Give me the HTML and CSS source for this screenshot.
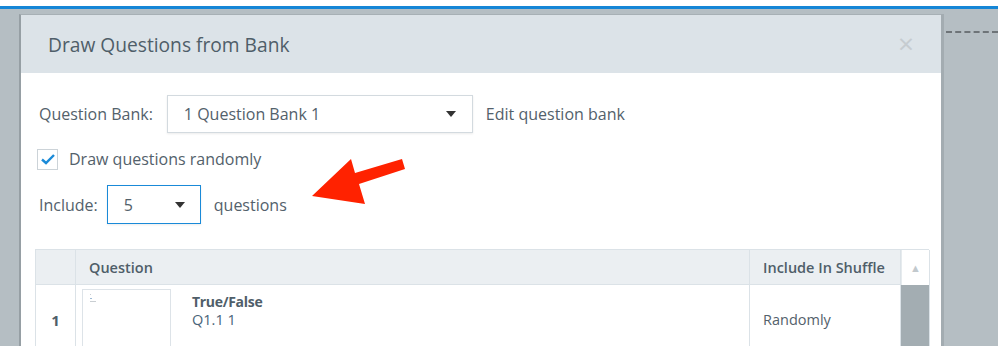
FILE: index.html
```html
<!DOCTYPE html>
<html lang="en">
<head>
    <meta charset="UTF-8">
    <title>Draw Questions from Bank</title>
    <link rel="stylesheet" href="styles.css">
</head>
<body>
    <div class="topbar"></div>

    <div class="stage">
        <div class="dialog">
            <div class="dialog-header">
                <span class="dialog-title">Draw Questions from Bank</span>
                <span class="close">&times;</span>
            </div>

            <div class="dialog-body">
                <div class="form-row">
                    <span class="label">Question Bank:</span>
                    <div class="select bank-select">
                        <span>1 Question Bank 1</span>
                        <span class="caret"></span>
                    </div>
                    <span class="link">Edit question bank</span>
                </div>

                <div class="form-row check-row">
                    <span class="checkbox">
                        <svg width="16" height="16" viewBox="0 0 16 16"><path d="M2 8.5 L6 12 L14 4" fill="none" stroke="#1a8ad8" stroke-width="2.4"/></svg>
                    </span>
                    <span class="label">Draw questions randomly</span>
                </div>

                <div class="form-row include-row">
                    <span class="label">Include:</span>
                    <div class="select count-select">
                        <span>5</span>
                        <span class="caret"></span>
                    </div>
                    <span class="label">questions</span>

                    <svg class="arrow" width="100" height="50" viewBox="0 0 100 50">
                        <polygon points="90,0 93,10 47,25 53,45 0,37 39,0 43,14" fill="#ff2200"/>
                    </svg>
                </div>

                <div class="table">
                    <div class="cell head num"></div>
                    <div class="cell head">Question</div>
                    <div class="cell head">Include In Shuffle</div>
                    <div class="cell scroll-up">&#9650;</div>

                    <div class="cell num row-num">1</div>
                    <div class="cell question">
                        <div class="thumb">
                            <span class="dot"></span>
                            <span class="dash blue"></span>
                            <span class="dash"></span>
                        </div>
                        <div class="q-text">
                            <div class="q-type">True/False</div>
                            <div class="q-name">Q1.1 1</div>
                        </div>
                    </div>
                    <div class="cell shuffle">Randomly</div>
                    <div class="cell scroll-thumb"></div>
                </div>
            </div>
        </div>
        <div class="dashes"></div>
    </div>
</body>
</html>
```

FILE: styles.css
```css
body {
    margin: 0;
    height: 346px;
    overflow: hidden;
    background-color: #b5bec3;
    font-family: "Open Sans", sans-serif;
    color: #53616b;
}

.topbar {
    height: 6px;
    background-color: #fff;
    border-bottom: 3px solid #1586d6;
}

.stage {
    display: flex;
    align-items: flex-start;
    padding-top: 5px;
    padding-left: 19px;
}

.dialog {
    width: 920px;
    background-color: #fff;
    border-left: 2px solid #969fa4;
    border-top: 1px solid #a7b0b5;
    box-shadow: 3px 0 0 #a3acb1;
    height: 400px;
}

.dialog-header {
    height: 58px;
    background-color: #dce3e8;
    display: flex;
    align-items: center;
    justify-content: space-between;
    padding: 0 27px 0 27px;
}

.dialog-title {
    font-size: 19.2px;
    color: #4f5e69;
}

.close {
    font-size: 28px;
    color: #c6ccd0;
    line-height: 1;
    margin-top: -2px;
}

.dialog-body {
    padding: 22px 12px 0 14px;
}

.form-row {
    display: flex;
    align-items: center;
    padding-left: 4px;
    font-size: 16px;
}

.select {
    display: flex;
    align-items: center;
    justify-content: space-between;
    box-sizing: border-box;
    background-color: #fff;
    border: 1px solid #d3dadf;
    box-shadow: 0 1px 2px rgba(0, 0, 0, 0.08);
    color: #53616b;
}

.bank-select {
    width: 306px;
    height: 38px;
    margin-left: 14px;
    padding: 0 16px 0 16px;
}

.caret {
    width: 0;
    height: 0;
    border-left: 5px solid transparent;
    border-right: 5px solid transparent;
    border-top: 6px solid #333;
}

.link {
    margin-left: 13px;
}

.check-row {
    margin-top: 15px;
    padding-left: 2px;
}

.checkbox {
    width: 21px;
    height: 21px;
    box-sizing: border-box;
    border: 1px solid #ccd3d8;
    display: flex;
    align-items: center;
    justify-content: center;
    margin-right: 11px;
}

.include-row {
    margin-top: 15px;
    position: relative;
}

.count-select {
    width: 94px;
    height: 39px;
    margin-left: 9px;
    margin-right: 13px;
    padding: 0 15px 0 16px;
    border-color: #1a8ad8;
}

.arrow {
    position: absolute;
    left: 277px;
    top: -26px;
}

.table {
    margin-top: 25px;
    display: grid;
    grid-template-columns: 40px 674px 151px 29px;
    grid-template-rows: 35px 70px;
    border-top: 1px solid #dbe2e7;
    border-left: 1px solid #dbe2e7;
    width: 894px;
    box-sizing: border-box;
}

.cell {
    border-right: 1px solid #dbe2e7;
    border-bottom: 1px solid #dbe2e7;
    font-size: 14.5px;
    overflow: hidden;
}

.head {
    background-color: #ebeff2;
    display: flex;
    align-items: center;
    padding-left: 13px;
    font-weight: 600;
    color: #4f5e69;
}

.head.num {
    padding-left: 0;
}

.scroll-up {
    box-sizing: border-box;
    background-color: #fff;
    color: #c2c9cd;
    font-size: 11px;
    display: flex;
    align-items: center;
    justify-content: center;
    border-right: 1px solid #dbe2e7;
    border-bottom: 0;
    border-left: 1px solid #e6ebee;
}

.row-num {
    display: flex;
    align-items: center;
    justify-content: center;
    font-weight: 700;
    font-size: 15px;
    color: #4f5e69;
}

.question {
    display: flex;
    padding: 4px 0 0 6px;
}

.thumb {
    width: 89px;
    height: 70px;
    flex-shrink: 0;
    box-sizing: border-box;
    border: 1px solid #dde3e8;
    position: relative;
}

.dot, .dash {
    position: absolute;
    height: 1px;
    background-color: #c9ced2;
}

.dot {
    left: 7px;
    top: 4px;
    width: 1px;
}

.dash {
    left: 7px;
    top: 11px;
    width: 6px;
}

.dash.blue {
    top: 8px;
    width: 2px;
    background-color: #9db9d4;
}

.q-text {
    margin-left: 21px;
    padding-top: 4px;
    line-height: 18px;
}

.q-type {
    font-weight: 700;
    font-size: 14px;
    letter-spacing: -0.3px;
    color: #4f5e69;
}

.q-name {
    font-size: 14.5px;
    color: #4a6478;
}

.shuffle {
    display: flex;
    align-items: center;
    padding-left: 13px;
}

.scroll-thumb {
    background-color: #a3adb2;
    border-right: 1px solid #dbe2e7;
}

.dashes {
    margin-left: 5px;
    margin-top: 17px;
    flex: 1;
    border-top: 2px dashed #6e7478;
}
```
